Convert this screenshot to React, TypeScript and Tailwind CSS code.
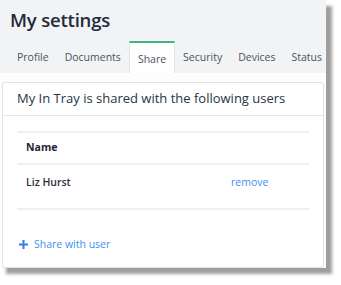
export default function App() {
  const tabs = ["Profile", "Documents", "Share", "Security", "Devices", "Status"];
  return (
    <div className="w-[341px] h-[285px] bg-white overflow-hidden" style={{ fontFamily: '"Open Sans", "Noto Sans", sans-serif' }}>
      <div className="w-[326px] h-[268px] flex flex-col bg-[#fdfdfd] shadow-[6px_6px_3px_rgba(0,0,0,0.38)]">
        <div className="bg-[#f2f3f4] h-[73px] flex flex-col">
          <h1 className="pl-[10px] pt-[5px] text-[18.5px] leading-[30px] font-semibold text-[#1f2b3a] tracking-[-0.2px]">My settings</h1>
          <div className="flex mt-auto pl-[9px] h-[32px]">
            {tabs.map((t) =>
              t === "Share" ? (
                <div key={t} className="px-[8px] flex items-center bg-white border-t-2 border-[#3cb878] border-x border-x-[#e3e5e7] text-[10.5px] text-[#4a5360] pt-[3px]">
                  {t}
                </div>
              ) : (
                <div key={t} className="px-[8px] flex items-center text-[10.5px] text-[#4a5360] pt-[2px]">
                  {t}
                </div>
              )
            )}
          </div>
        </div>
        <div className="flex-1 pt-[9px] px-[2px] pb-0">
          <div className="h-full border border-[#e1e3e5] rounded-[3px] bg-white flex flex-col">
            <div className="h-[33px] flex items-center px-[14px] border-b border-[#e6e8ea] text-[13px] text-[#263445]">
              My In Tray is shared with the following users
            </div>
            <div className="px-[14px] pt-[15px]">
              <div className="border-t-2 border-[#eeeff0]">
                <div className="h-[32px] flex items-center px-[9px] text-[10.5px] font-bold text-[#1f2530] border-b-2 border-[#eeeff0]">
                  Name
                </div>
                <div className="h-[45px] flex items-start pt-[10px] px-[9px] text-[10.5px] border-b-2 border-[#eeeff0]">
                  <span className="font-semibold text-[#2b313a] w-[205px]">Liz Hurst</span>
                  <span className="text-[#3d8ff0]">remove</span>
                </div>
              </div>
            </div>
            <div className="mt-[27px] px-[15px] flex items-center gap-[5px] text-[10.5px] text-[#3d8ff0]">
              <svg width="11" height="11" viewBox="0 0 11 11">
                <path d="M5.5 1v9M1 5.5h9" stroke="#2e7fe8" strokeWidth="2" />
              </svg>
              <span>Share with user</span>
            </div>
          </div>
        </div>
      </div>
    </div>
  );
}
